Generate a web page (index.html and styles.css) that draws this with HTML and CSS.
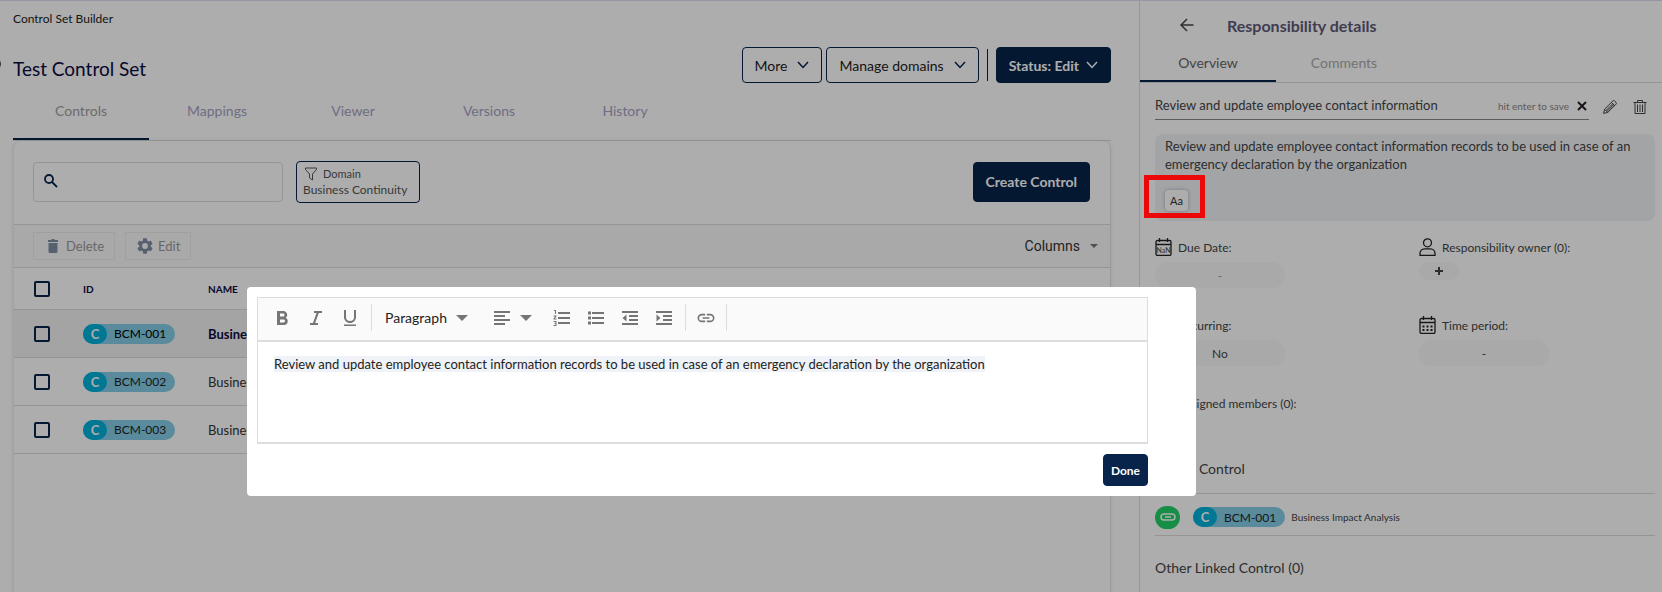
FILE: index.html
```html
<!DOCTYPE html>
<html lang="en">
<head>
  <meta charset="UTF-8">
  <meta name="viewport" content="width=device-width, initial-scale=1.0">
  <title>Test Control Set</title>
  <link rel="stylesheet" href="styles.css">
</head>
<body>
  <span class="nav-toggle"></span>
  <div class="layout">
    <main class="main">
      <a class="breadcrumb" href="#">Control Set Builder</a>

      <header class="page-header">
        <h1>Test Control Set</h1>
        <div class="header-actions">
          <button class="btn btn-outline">More <svg width="12" height="8" viewBox="0 0 12 8"><path d="M1 1l5 5.500 5-5.500"/></svg></button>
          <button class="btn btn-outline">Manage domains <svg width="12" height="8" viewBox="0 0 12 8"><path d="M1 1l5 5.500 5-5.500"/></svg></button>
          <span class="divider"></span>
          <button class="btn btn-primary btn-status">Status: Edit <svg width="12" height="8" viewBox="0 0 12 8"><path d="M1 1l5 5.500 5-5.500"/></svg></button>
        </div>
      </header>

      <nav class="tabs">
        <a class="tab active" href="#">Controls</a>
        <a class="tab" href="#">Mappings</a>
        <a class="tab" href="#">Viewer</a>
        <a class="tab" href="#">Versions</a>
        <a class="tab" href="#">History</a>
      </nav>

      <section class="card">
        <div class="filters">
          <label class="search">
            <svg width="14" height="14" viewBox="0 0 14 14"><circle cx="5" cy="5" r="4"/><path d="M8 8l5 5"/></svg>
            <input type="text" aria-label="Search">
          </label>
          <button class="domain-filter">
            <span class="domain-label">
              <svg width="12" height="14" viewBox="0 0 12 14"><path d="M.5 1h11v1.500L7.500 7v6l-3-2V7L.5 2.500z"/></svg>
              Domain
            </span>
            <span>Business Continuity</span>
          </button>
          <button class="btn btn-primary btn-create">Create Control</button>
        </div>

        <div class="actions">
          <button class="action" disabled>
            <svg width="10" height="14" viewBox="0 0 10 14"><path d="M0 1h3l1-1h2l1 1h3v2H0zM.5 4h9v8.500a1.500 1.500 0 0 1-1.500 1.500H2A1.500 1.500 0 0 1 .5 12.500z"/></svg>
            Delete
          </button>
          <button class="action action-edit" disabled>
            <svg width="16" height="16" viewBox="2 2 20 20"><path d="M19.140 12.940c.04-.3.060-.61.060-.94 0-.32-.02-.64-.07-.94l2.030-1.580a.49.49 0 0 0 .12-.61l-1.920-3.320a.49.49 0 0 0-.59-.22l-2.390.96c-.5-.38-1.030-.7-1.620-.94l-.36-2.540a.48.48 0 0 0-.48-.41h-3.840c-.24 0-.43.17-.47.41l-.36 2.540c-.59.24-1.130.57-1.620.94l-2.390-.96a.48.48 0 0 0-.59.22L2.740 8.870c-.12.21-.08.47.12.61l2.030 1.580c-.05.3-.09.63-.09.94s.02.64.07.94l-2.030 1.580a.49.49 0 0 0-.12.61l1.920 3.320c.12.22.37.29.59.22l2.390-.96c.5.38 1.030.7 1.620.94l.36 2.540c.05.24.24.41.48.41h3.840c.24 0 .44-.17.47-.41l.36-2.540c.59-.24 1.130-.56 1.620-.94l2.390.96c.22.080.47 0 .59-.22l1.920-3.320a.48.48 0 0 0-.12-.61zM12 15.600A3.600 3.600 0 1 1 12 8.400a3.600 3.600 0 0 1 0 7.200z"/></svg>
            Edit
          </button>
          <button class="columns">Columns <span class="caret"></span></button>
        </div>

        <table class="controls-table">
          <thead>
            <tr>
              <th class="col-check"><input type="checkbox" aria-label="Select all"></th>
              <th class="col-id">ID</th>
              <th>NAME</th>
            </tr>
          </thead>
          <tbody>
            <tr class="selected">
              <td><input type="checkbox" aria-label="Select BCM-001"></td>
              <td><span class="badge"><span class="badge-type">C</span>BCM-001</span></td>
              <td>Business Impact Analysis</td>
            </tr>
            <tr>
              <td><input type="checkbox" aria-label="Select BCM-002"></td>
              <td><span class="badge"><span class="badge-type">C</span>BCM-002</span></td>
              <td>Business</td>
            </tr>
            <tr>
              <td><input type="checkbox" aria-label="Select BCM-003"></td>
              <td><span class="badge"><span class="badge-type">C</span>BCM-003</span></td>
              <td>Business</td>
            </tr>
          </tbody>
        </table>
      </section>
    </main>

    <aside class="panel">
      <header class="panel-header">
        <button class="icon-btn back" aria-label="Back"><svg width="14" height="14" viewBox="0 0 14 14"><path d="M13.500 7H1M7 1L1 7l6 6"/></svg></button>
        <h2>Responsibility details</h2>
      </header>
      <nav class="tabs panel-tabs">
        <a class="tab active" href="#">Overview</a>
        <a class="tab" href="#">Comments</a>
      </nav>

      <div class="panel-body">
        <div class="title-row">
          <div class="title-field">
            <input type="text" aria-label="Responsibility name" value="Review and update employee contact information">
            <span class="hint">hit enter to save</span>
            <button class="icon-btn close" aria-label="Cancel"><svg width="10" height="10" viewBox="0 0 10 10"><path d="M1 1l8 8M9 1L1 9"/></svg></button>
          </div>
          <button class="icon-btn" aria-label="Edit"><svg width="14" height="14" viewBox="0 0 14 14"><path d="M.6 13.400l1-4.200L9.800 1a1.300 1.300 0 0 1 1.800 0L13 2.400a1.300 1.300 0 0 1 0 1.800l-8.200 8.200zM1.600 9.200l3.200 3.200M8.300 2.500l3.200 3.200M3 10.500l7-7M4 11.400l6.600-6.600"/></svg></button>
          <button class="icon-btn" aria-label="Delete"><svg width="14" height="14" viewBox="0 0 14 14"><path d="M.5 2.500h13M4.500 2V.5h5V2M2 3v10.500h10V3M4.500 4.500V12M7 4.500V12M9.500 4.500V12"/></svg></button>
        </div>

        <div class="description">
          <p>Review and update employee contact information records to be used in case of an emergency declaration by the organization</p>
          <button class="format-btn">Aa</button>
        </div>

        <div class="details">
          <div class="detail">
            <div class="detail-label">
              <svg width="18" height="18" viewBox="0 0 18 18"><rect x="1" y="2.500" width="15" height="15" rx="1.500"/><path d="M1 6.500h15M4.500 0v4M12.500 0v4"/><text x="8.500" y="15">NaN</text></svg>
              Due Date:
            </div>
            <button class="value muted">-</button>
          </div>
          <div class="detail">
            <div class="detail-label">
              <svg width="18" height="18" viewBox="0 0 18 18"><circle cx="8.500" cy="4.800" r="4"/><path d="M1 17.300v-2a4.500 4.500 0 0 1 4.500-4.500h6a4.500 4.500 0 0 1 4.500 4.500v2z"/></svg>
              Responsibility owner (0):
            </div>
            <button class="value value-add" aria-label="Add owner"><svg width="8" height="8" viewBox="0 0 8 8"><path d="M4 0v8M0 4h8"/></svg></button>
          </div>
          <div class="detail">
            <div class="detail-label">
              <svg width="18" height="18" viewBox="0 0 18 18"><path d="M2 9a6.500 6.500 0 0 1 12-3M15 9a6.500 6.500 0 0 1-12 3"/></svg>
              Recurring:
            </div>
            <button class="value">No</button>
          </div>
          <div class="detail">
            <div class="detail-label">
              <svg width="18" height="18" viewBox="0 0 18 18"><rect x="1" y="2.500" width="15" height="15" rx="1.500"/><path d="M1 6.500h15M4.500 0v4M12.500 0v4"/><path class="dots" d="M3.500 10.500h10M3.500 14h10"/></svg>
              Time period:
            </div>
            <button class="value">-</button>
          </div>
          <div class="detail">
            <div class="detail-label">
              <svg width="18" height="18" viewBox="0 0 18 18"><circle cx="8.500" cy="4.800" r="4"/><path d="M1 17.300v-2a4.500 4.500 0 0 1 4.500-4.500h6a4.500 4.500 0 0 1 4.500 4.500v2z"/></svg>
              Assigned members (0):
            </div>
          </div>
        </div>

        <h3>Linked Control</h3>
        <div class="linked-row">
          <span class="link-icon"><svg width="16" height="8" viewBox="0 0 16 8"><rect x="1" y="1" width="14" height="6" rx="3"/><path d="M5 4h6"/></svg></span>
          <span class="badge"><span class="badge-type">C</span>BCM-001</span>
          <span class="linked-name">Business Impact Analysis</span>
        </div>
        <h3>Other Linked Control (0)</h3>
      </div>
    </aside>
  </div>

  <div class="overlay">
    <div class="modal" role="dialog" aria-label="Edit description">
      <div class="editor">
        <div class="toolbar">
          <button class="tool" aria-label="Bold"><svg width="24" height="24" viewBox="0 0 24 24"><path d="M15.600 11.790c.97-.67 1.650-1.770 1.650-2.790 0-2.260-1.750-4-4-4H7v14h7.040c2.090 0 3.710-1.700 3.710-3.790 0-1.520-.86-2.820-2.150-3.420zM10 7.500h3c.83 0 1.500.67 1.500 1.500s-.67 1.500-1.500 1.500h-3v-3zm3.500 9H10v-3h3.500c.83 0 1.500.67 1.500 1.500s-.67 1.500-1.500 1.500z"/></svg></button>
          <button class="tool" aria-label="Italic"><svg width="24" height="24" viewBox="0 0 24 24"><path d="M10 5v2h2.600l-3.700 10H6v2h8v-2h-2.900l3.700-10H18V5z"/></svg></button>
          <button class="tool" aria-label="Underline"><svg width="24" height="24" viewBox="0 0 24 24"><path d="M12 17c3.310 0 6-2.690 6-6V4h-2v7a4 4 0 0 1-8 0V4H6v7c0 3.310 2.690 6 6 6zm-6 1.500V20h12v-1.500z"/></svg></button>
          <span class="tool-divider"></span>
          <button class="tool-select">Paragraph <span class="caret"></span></button>
          <button class="tool-select tool-align" aria-label="Align"><svg width="24" height="24" viewBox="0 0 24 24"><path d="M4 5h16v2H4zM4 9h11v2H4zM4 13h16v2H4zM4 17h11v2H4z"/></svg><span class="caret"></span></button>
          <button class="tool" aria-label="Numbered list"><svg width="24" height="24" viewBox="0 0 24 24"><path d="M8 6h12v2H8zM8 11h12v2H8zM8 16h12v2H8zM4 4h2v4H5V5H4zM3.500 9.500h3v1l-1.700 2h1.700v1h-3v-1l1.700-2H3.500zM3.500 15h3v5h-3v-1h2v-1h-1v-1h1v-1h-2z"/></svg></button>
          <button class="tool" aria-label="Bulleted list"><svg width="24" height="24" viewBox="0 0 24 24"><path d="M8 6h12v2H8zM8 11h12v2H8zM8 16h12v2H8zM4 5.500h3v3H4zM4 10.500h3v3H4zM4 15.500h3v3H4z"/></svg></button>
          <button class="tool" aria-label="Outdent"><svg width="24" height="24" viewBox="0 0 24 24"><path d="M4 5h16v2H4zM11 9h9v2h-9zM11 13h9v2h-9zM4 17h16v2H4zM8.500 8.500v7L4.500 12z"/></svg></button>
          <button class="tool" aria-label="Indent"><svg width="24" height="24" viewBox="0 0 24 24"><path d="M4 5h16v2H4zM11 9h9v2h-9zM11 13h9v2h-9zM4 17h16v2H4zM4.500 8.500v7l4-3.500z"/></svg></button>
          <span class="tool-divider"></span>
          <button class="tool" aria-label="Link"><svg width="22" height="24" viewBox="-1 -1 26 26"><path d="M3.900 12c0-1.710 1.390-3.100 3.100-3.100h4V7H7a5 5 0 0 0 0 10h4v-1.900H7A3.100 3.100 0 0 1 3.900 12zM8 13h8v-2H8zm9-6h-4v1.900h4a3.100 3.100 0 0 1 0 6.200h-4V17h4a5 5 0 0 0 0-10z"/></svg></button>
          <span class="tool-divider"></span>
        </div>
        <div class="editor-content" contenteditable="true" role="textbox" aria-label="Description"><span class="marked">Review and update employee contact information records to be used in case of an emergency declaration by the organization</span></div>
      </div>
      <button class="btn btn-primary btn-done">Done</button>
    </div>
  </div>
</body>
</html>
```
FILE: styles.css
```css
*, *::after {
  box-sizing: border-box;
}
body {
  margin: 0;
  font-family: Lato, "Open Sans", sans-serif;
  font-size: 14px;
  color: #333;
  background: #fff;
}
h1, h2, h3, p {
  margin: 0;
  font-weight: 400;
}
button, input {
  font-family: inherit;
}
button {
  cursor: pointer;
}
a {
  text-decoration: none;
}
svg {
  display: block;
  flex: none;
  fill: none;
  stroke: currentColor;
}
.layout {
  display: flex;
  height: 100vh;
  overflow: hidden;
  border-top: 1px solid #e0ddf0;
}
.nav-toggle {
  position: absolute;
  top: 58px;
  left: -11px;
  width: 12px;
  height: 12px;
  border-radius: 50%;
  background: #555;
}

/* Main column */
.main {
  flex: 1;
  display: flex;
  flex-direction: column;
  padding: 10px 28px 0 13px;
}
.breadcrumb {
  font-size: 12px;
  line-height: 16px;
  color: #222;
}
.page-header {
  display: flex;
  justify-content: space-between;
  align-items: flex-start;
  margin-top: 20px;
}
h1 {
  font-size: 19px;
  line-height: 44px;
  color: #0c0c42;
}
.header-actions {
  display: flex;
  align-items: center;
  gap: 4px;
}
.btn {
  display: flex;
  align-items: center;
  justify-content: center;
  gap: 10px;
  height: 36px;
  padding: 0 12px;
  border: 1px solid #08244a;
  border-radius: 4px;
  font-size: 14px;
}
.btn-outline {
  background: none;
  color: #222;
}
.btn-outline svg {
  color: #08244a;
}
.header-actions svg {
  stroke-width: 1.5;
}
.btn-primary {
  background: #08244a;
  color: #fff;
  font-weight: 700;
}
.btn-status {
  gap: 7px;
}
.divider {
  width: 1px;
  height: 32px;
  margin: 0 4px;
  background: #08244a;
}
.tabs {
  display: flex;
  margin-top: 1px;
  border-bottom: 1px solid #dcdcdc;
}
.tab {
  width: 136px;
  height: 48px;
  padding-top: 9px;
  border-bottom: 2px solid transparent;
  line-height: 20px;
  text-align: center;
  color: #a4a2c4;
}
.tab.active {
  border-color: #08244a;
  color: #a0a0a0;
}
.card {
  flex: 1;
  border-left: 1px solid #eee;
  border-right: 1px solid #e4e4e4;
  border-radius: 8px 8px 0 0;
  box-shadow: 0 0 4px rgba(0, 0, 0, 0.1);
}
.filters {
  display: flex;
  align-items: center;
  gap: 13px;
  height: 83px;
  padding: 0 20px 2px 19px;
}
.search {
  display: flex;
  align-items: center;
  gap: 8px;
  width: 250px;
  height: 40px;
  padding: 0 10px 2px;
  border: 1px solid #ddd;
  border-radius: 4px;
}
.search svg {
  color: #08244a;
  stroke-width: 1.8;
}
.search input {
  flex: 1;
  min-width: 0;
  border: 0;
  outline: 0;
  background: none;
}
.domain-filter {
  display: flex;
  flex-direction: column;
  justify-content: center;
  height: 42px;
  padding: 0 12px 0 6px;
  border: 1px solid #08244a;
  border-radius: 4px;
  background: none;
  font-size: 12px;
  line-height: 16px;
  color: #555;
}
.domain-label {
  display: flex;
  align-items: center;
  gap: 6px;
  padding-left: 2px;
  font-size: 11px;
}
.btn-create {
  height: 40px;
  margin-left: auto;
}
.actions {
  display: flex;
  align-items: center;
  gap: 10px;
  height: 43px;
  padding: 0 12px 0 19px;
  border-top: 1px solid #dcdcdc;
  background: #fafafa;
}
.action {
  display: flex;
  align-items: center;
  gap: 8px;
  height: 28px;
  padding: 0 10px 0 14px;
  border: 1px solid #ececec;
  background: none;
  font-size: 13px;
  color: #999;
}
.action-edit {
  gap: 5px;
  padding-left: 11px;
}
.action svg {
  fill: #818ea2;
  stroke: none;
}
.columns {
  display: flex;
  align-items: center;
  gap: 10px;
  margin-left: auto;
  padding: 0;
  border: 0;
  background: none;
  font-family: Roboto, sans-serif;
  font-size: 14px;
  color: #333;
}
.caret {
  border: 5px solid transparent;
  border-top-color: #757575;
  border-bottom: 0;
}
.columns .caret {
  border-width: 4px 4px 0;
}

/* Controls table */
.controls-table {
  width: 100%;
  border-collapse: collapse;
}
.controls-table tr {
  height: 48px;
  border-top: 1px solid #dcdcdc;
  border-bottom: 1px solid #dcdcdc;
}
.controls-table thead tr {
  height: 42px;
}
.controls-table th {
  padding: 0;
  font-size: 10px;
  font-weight: 700;
  text-align: left;
  color: #0c0c42;
}
.controls-table td {
  padding: 0;
  font-size: 13px;
}
.controls-table .col-check {
  width: 69px;
}
.controls-table .col-id {
  width: 125px;
}
.controls-table input {
  appearance: none;
  display: block;
  width: 16px;
  height: 16px;
  margin: 0 0 0 20px;
  border: 2px solid #08244a;
  border-radius: 2px;
}
.selected {
  background: #f2f2f2;
  font-weight: 700;
  color: #0c0c42;
}
.badge {
  display: inline-flex;
  align-items: center;
  height: 20px;
  padding-right: 9px;
  border-radius: 10px;
  background: #83cde8;
  font-size: 12px;
  font-weight: 400;
  color: #222;
  vertical-align: middle;
}
.selected .badge {
  color: #000;
}
.badge-type {
  width: 24px;
  margin-right: 7px;
  border-radius: 10px;
  background: #00b1d9;
  font-size: 13px;
  line-height: 20px;
  font-weight: 700;
  text-align: center;
  color: #fff;
}

/* Details panel */
.panel {
  width: 523px;
  border-left: 1px solid #e0e0e0;
  color: #444;
}
.panel-header {
  display: flex;
  align-items: center;
  gap: 33px;
  height: 48px;
  padding-left: 40px;
}
h2 {
  font-size: 16px;
  font-weight: 700;
  color: #5f5b78;
}
.icon-btn {
  padding: 0;
  border: 0;
  background: none;
  color: #444;
}
.back {
  stroke-width: 1.5;
}
.panel-tabs {
  margin-top: 0;
}
.panel-tabs .tab {
  height: 33px;
  padding-top: 4px;
  color: #aaa;
}
.panel-tabs .tab.active {
  color: #666;
}
.panel-body {
  padding: 10px 7px 0 15px;
}
.title-row {
  display: flex;
  align-items: center;
  gap: 14px;
  padding-right: 8px;
}
.title-row > .icon-btn + .icon-btn {
  margin-left: 2px;
}
.title-field {
  flex: 1;
  display: flex;
  align-items: center;
  gap: 8px;
  height: 27px;
  padding-right: 2px;
  border-bottom: 1px solid #888;
}
.title-field input {
  flex: 1;
  min-width: 0;
  padding: 0 0 2px;
  border: 0;
  outline: 0;
  background: none;
  font-size: 13px;
  color: #444;
}
.hint {
  font-size: 10px;
  color: #888;
}
.close {
  color: #222;
  stroke-width: 2;
}
.description {
  height: 87px;
  margin-top: 14px;
  padding: 3px 10px;
  border-radius: 8px;
  background: #f0f2f5;
}
.description p {
  font-size: 13px;
  line-height: 18px;
}
.format-btn {
  position: relative;
  width: 23px;
  height: 21px;
  margin-top: 17px;
  padding: 0;
  border: 0;
  border-radius: 4px;
  background: #fff;
  box-shadow: 0 0 4px rgba(8, 36, 74, 0.3);
  font-size: 11px;
  color: #333;
}
/* Highlight stays visible above the overlay */
.format-btn::after {
  content: "";
  position: absolute;
  z-index: 20;
  top: -15px;
  left: -21px;
  width: 61px;
  height: 43px;
  border: 5px solid #ec0808;
}
.details {
  display: grid;
  grid-template-columns: 264px 1fr;
  grid-template-rows: 78px 78px 66px;
  margin-top: 16px;
}
.detail-label {
  display: flex;
  align-items: center;
  gap: 5px;
  height: 20px;
  font-size: 12px;
}
.detail-label svg {
  color: #222;
  stroke-width: 1.3;
}
.detail-label svg text {
  font-size: 7px;
  text-anchor: middle;
  fill: #444;
  stroke: none;
}
.detail-label .dots {
  stroke-width: 2;
  stroke-dasharray: 2 2;
}
.value {
  display: flex;
  align-items: center;
  justify-content: center;
  width: 130px;
  height: 26px;
  margin-top: 5px;
  border: 0;
  border-radius: 13px;
  background: #f9f9f9;
  font-size: 12px;
  color: #444;
}
.muted {
  color: #999;
}
.value-add {
  width: 40px;
  height: 18px;
}
.value-add svg {
  stroke-width: 2;
}
h3 {
  font-size: 14px;
  line-height: 20px;
}
.linked-row {
  display: flex;
  align-items: center;
  height: 43px;
  margin: 14px 0 22px;
  padding-top: 5px;
  border-top: 1px solid #dcdcdc;
  border-bottom: 1px solid #dcdcdc;
}
.link-icon {
  display: flex;
  align-items: center;
  justify-content: center;
  width: 25px;
  height: 23px;
  margin-right: 13px;
  border-radius: 12px;
  background: #22d268;
  color: #fff;
}
.link-icon svg {
  stroke-width: 1.5;
}
.linked-name {
  margin-left: 6px;
  font-size: 10px;
}

/* Editor dialog */
.overlay {
  position: fixed;
  inset: 0;
  z-index: 10;
  padding: 287px 466px 0 247px;
  background: rgba(0, 0, 0, 0.32);
}
.modal {
  padding: 10px 48px 10px 10px;
  border-radius: 4px;
  background: #fff;
}
.editor {
  border: 1px solid #ddd;
  border-bottom-width: 2px;
}
.toolbar {
  display: flex;
  align-items: center;
  gap: 10px;
  height: 44px;
  padding: 0 12px 3px;
  border-bottom: 2px solid #ddd;
  background: #fafafa;
}
.tool, .tool-select {
  display: flex;
  align-items: center;
  gap: 9px;
  padding: 0;
  border: 0;
  background: none;
  font-size: 14px;
  color: #222;
}
.toolbar svg {
  fill: #757575;
  stroke: none;
}
.tool-select {
  margin: 0 8px 0 4px;
}
.tool-select .caret {
  border-width: 6px 6px 0;
}
.tool-align {
  gap: 6px;
}
.tool-divider {
  width: 1px;
  height: 27px;
  margin: 0 -1px;
  background: #ddd;
}
.editor-content {
  height: 100px;
  padding: 13px 16px;
  outline: 0;
  font-size: 13px;
  line-height: 18px;
  color: #222;
}
.marked {
  background: #eff2f6;
}
.btn-done {
  height: 32px;
  margin: 10px 0 0 auto;
  padding: 0 7px;
  font-size: 12px;
}
```
